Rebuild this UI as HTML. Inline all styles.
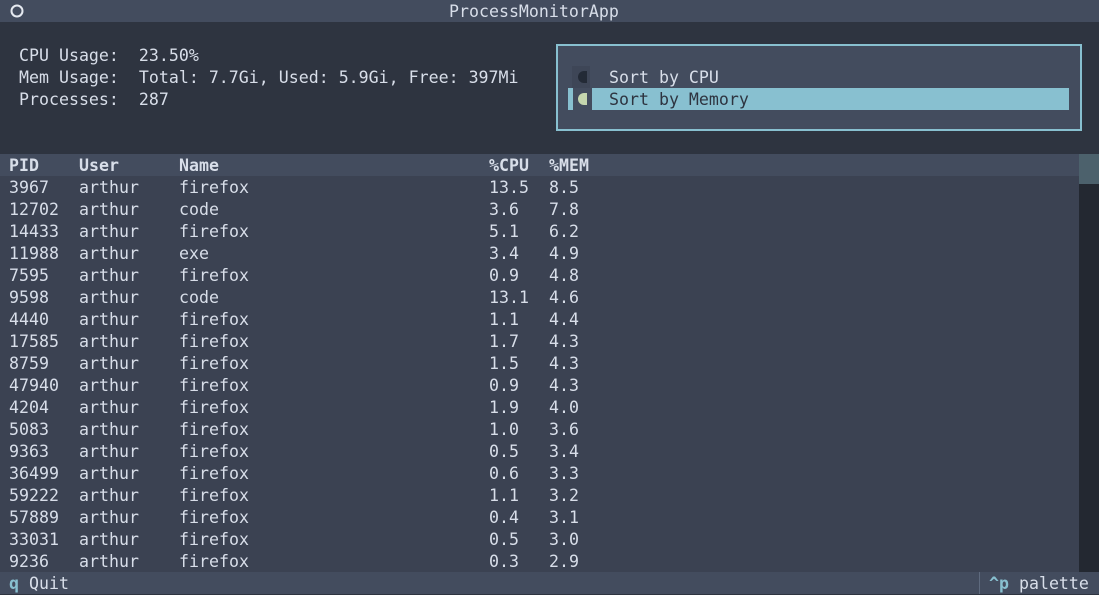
<!DOCTYPE html>
<html><head><meta charset="utf-8"><style>
*{margin:0;padding:0;box-sizing:border-box}
body{width:1099px;height:594px;overflow:hidden;background:#2e3440;font-family:"DejaVu Sans Mono","Liberation Mono",monospace;font-size:16.6px;color:#d8dee9;position:relative}
.a{position:absolute;white-space:pre;line-height:22px;padding-top:1px}
#title{left:0;top:0;width:1099px;height:22px;background:#434c5e}
#box{position:absolute;left:556px;top:44px;width:526px;height:87px;border:2px solid #88c0d0;background:#434c5e}
#table{position:absolute;left:0;top:154px;width:1079px;height:418px;background:#3b4252}
#hdr{position:absolute;left:0;top:154px;width:1079px;height:22px;background:#434c5e}
#track{position:absolute;left:1079px;top:154px;width:20px;height:418px;background:#232831}
#thumb{position:absolute;left:1079px;top:154px;width:20px;height:30px;background:#4c616c}
#foot{position:absolute;left:0;top:572px;width:1099px;height:22px;background:#434c5e}
b{font-weight:bold}
</style></head><body>
<div class="a" id="title"></div>
<svg style="position:absolute;left:9px;top:3px" width="16" height="16"><circle cx="8" cy="8" r="5.5" fill="none" stroke="#e5e9f0" stroke-width="2"/></svg>
<div class="a" style="left:449px;top:0">ProcessMonitorApp</div>
<div class="a" style="left:19px;top:44px">CPU Usage:  23.50%</div>
<div class="a" style="left:19px;top:66px">Mem Usage:  Total: 7.7Gi, Used: 5.9Gi, Free: 397Mi</div>
<div class="a" style="left:19px;top:88px">Processes:  287</div>
<div id="box"></div>
<div style="position:absolute;left:572px;top:66px;width:18px;height:22px;background:#3e4657"></div>
<svg style="position:absolute;left:572px;top:66px" width="18" height="22"><path d="M12 5 A6 6 0 0 0 12 17 Z" fill="#232a36"/><rect x="12" y="5" width="3" height="12" fill="#232a36"/></svg>
<div style="position:absolute;left:568px;top:88px;width:5px;height:22px;background:#88c0d0"></div>
<svg style="position:absolute;left:572px;top:88px" width="18" height="22"><path d="M12 5 A6 6 0 0 0 12 17 Z" fill="#c5d6ae"/><rect x="12" y="5" width="3" height="12" fill="#c5d6ae"/></svg>
<div style="position:absolute;left:592px;top:88px;width:477px;height:22px;background:#88c0d0"></div>
<div class="a" style="left:609px;top:66px">Sort by CPU</div>
<div class="a" style="left:609px;top:88px;color:#2e3440">Sort by Memory</div>
<div id="table"></div><div id="hdr"></div><div id="track"></div><div id="thumb"></div>
<div id="foot"></div>
<div class="a" style="left:9px;top:572px"><b style="color:#88c0d0">q</b> Quit</div>
<div style="position:absolute;left:979px;top:572px;width:1px;height:22px;background:#5e6a7e"></div>
<div class="a" style="left:989px;top:572px"><b style="color:#88c0d0">^p</b> palette</div>
<div class="a" style="left:9px;top:154px;font-weight:bold">PID</div>
<div class="a" style="left:79px;top:154px;font-weight:bold">User</div>
<div class="a" style="left:179px;top:154px;font-weight:bold">Name</div>
<div class="a" style="left:489px;top:154px;font-weight:bold">%CPU</div>
<div class="a" style="left:549px;top:154px;font-weight:bold">%MEM</div>
<div class="a" style="left:9px;top:176px">3967
12702
14433
11988
7595
9598
4440
17585
8759
47940
4204
5083
9363
36499
59222
57889
33031
9236</div>
<div class="a" style="left:79px;top:176px">arthur
arthur
arthur
arthur
arthur
arthur
arthur
arthur
arthur
arthur
arthur
arthur
arthur
arthur
arthur
arthur
arthur
arthur</div>
<div class="a" style="left:179px;top:176px">firefox
code
firefox
exe
firefox
code
firefox
firefox
firefox
firefox
firefox
firefox
firefox
firefox
firefox
firefox
firefox
firefox</div>
<div class="a" style="left:489px;top:176px">13.5
3.6
5.1
3.4
0.9
13.1
1.1
1.7
1.5
0.9
1.9
1.0
0.5
0.6
1.1
0.4
0.5
0.3</div>
<div class="a" style="left:549px;top:176px">8.5
7.8
6.2
4.9
4.8
4.6
4.4
4.3
4.3
4.3
4.0
3.6
3.4
3.3
3.2
3.1
3.0
2.9</div>
</body></html>
